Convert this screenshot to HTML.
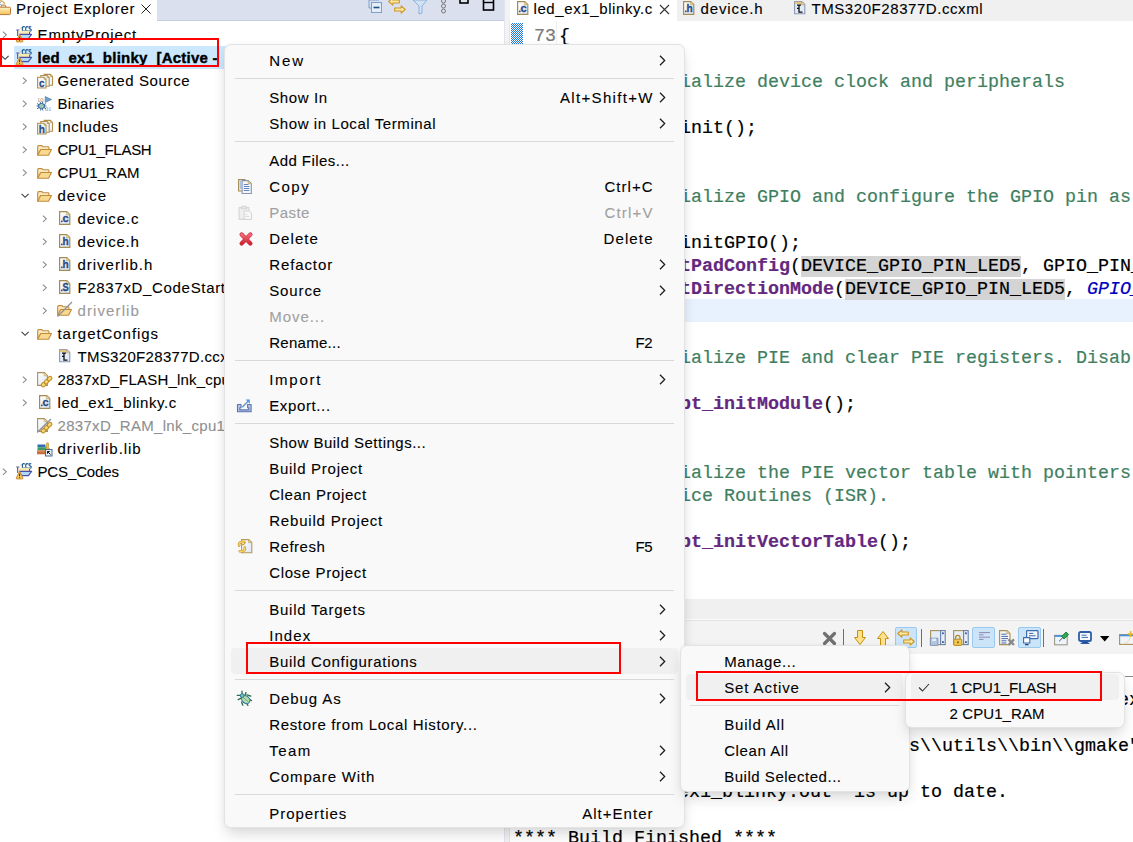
<!DOCTYPE html>
<html><head><meta charset="utf-8"><title>Eclipse context menu</title>
<style>
html,body{margin:0;padding:0;}
body{width:1133px;height:842px;overflow:hidden;position:relative;background:#fff;font-family:'Liberation Sans', sans-serif;}
.t{position:absolute;white-space:pre;font-family:'Liberation Sans', sans-serif;font-size:15px;line-height:20px;-webkit-text-stroke:0.1px currentColor;}
.m{position:absolute;white-space:pre;font-family:'Liberation Mono', monospace;font-size:18.33px;line-height:20px;color:#000;-webkit-text-stroke:0.2px currentColor;}
.m b{font-weight:bold;}
svg{overflow:visible;}
</style></head><body>
<svg width="0" height="0" style="position:absolute"><defs>
<linearGradient id="gPage" x1="0" y1="0" x2="1" y2="1"><stop offset="0" stop-color="#ffffff"/><stop offset="1" stop-color="#dde6f4"/></linearGradient>
<linearGradient id="gFold" x1="0" y1="0" x2="0" y2="1"><stop offset="0" stop-color="#fff6dc"/><stop offset="1" stop-color="#f2c66a"/></linearGradient>
<linearGradient id="gRed" x1="0" y1="0" x2="0" y2="1"><stop offset="0" stop-color="#f06a78"/><stop offset="1" stop-color="#d02838"/></linearGradient>
</defs></svg>
<div style="position:absolute;left:0px;top:0px;width:504px;height:21px;background:#dbe0ef;"></div>
<div style="position:absolute;left:0px;top:20px;width:504px;height:1px;background:#c8cde0;"></div>
<div style="position:absolute;left:0px;top:0px;width:157px;height:21px;background:#ffffff;"></div>
<svg style="position:absolute;left:0px;top:0px" width="12" height="16" viewBox="0 0 12 16"><defs><linearGradient id="gHf" x1="0" y1="0" x2="0" y2="1"><stop offset="0" stop-color="#fff4c8"/><stop offset="1" stop-color="#f2c052"/></linearGradient></defs><path d="M-1 0.5q4.5 0 5.8 3.6" fill="none" stroke="#d9b46a" stroke-width="1.4"/><path d="M0 2.5h1.2M0 4.5h1.6" stroke="#8aa8d8" stroke-width="0.9"/><path d="M1.2 7.2v-1.2q0-0.9 0.9-0.9h2.6q0.9 0 0.9 0.9v1.2" fill="#fff0c0" stroke="#b8783a" stroke-width="1"/><rect x="-1.5" y="7.2" width="12" height="7.4" rx="1" fill="url(#gHf)" stroke="#b8783a" stroke-width="1"/></svg>
<div class="t" style="left:16px;top:-1px;color:#000;letter-spacing:0.792px;">Project Explorer</div>
<svg style="position:absolute;left:141px;top:4px" width="10" height="10" viewBox="0 0 10 10"><path d="M0.5 0.5l9 9M9.5 0.5l-9 9" stroke="#222" stroke-width="1"/></svg>
<svg style="position:absolute;left:366px;top:0px" width="18" height="14" viewBox="0 0 18 14"><path d="M3 0v8h2M3 0h10" fill="none" stroke="#7aa0c8" stroke-width="1"/><rect x="5.5" y="2.5" width="10" height="10" fill="#e4eef8" stroke="#7aa0c8"/><path d="M7.5 7.5h6" stroke="#1e4f8a" stroke-width="1.6"/></svg>
<svg style="position:absolute;left:388px;top:-3px" width="19" height="18" viewBox="0 0 19 18"><path d="M0.8 4.5l4-3.7v2.2h6.5v3h-6.5v2.2z" fill="#fde9a6" stroke="#cf9420" stroke-width="1.1" stroke-linejoin="round"/><path d="M17.2 12.5l-4-3.7v2.2h-6.5v3h6.5v2.2z" fill="#fde9a6" stroke="#cf9420" stroke-width="1.1" stroke-linejoin="round"/></svg>
<svg style="position:absolute;left:412px;top:0px" width="16" height="14" viewBox="0 0 16 14"><path d="M1 0h14l-5 6v7l-3 1v-8z" fill="#cfe3f5" stroke="#8ab0d8" stroke-width="1"/></svg>
<svg style="position:absolute;left:439px;top:0px" width="9" height="14" viewBox="0 0 9 14"><circle cx="4.5" cy="1" r="2" fill="none" stroke="#777" stroke-width="1"/><circle cx="4.5" cy="6" r="2" fill="none" stroke="#777" stroke-width="1"/><circle cx="4.5" cy="11" r="2" fill="none" stroke="#777" stroke-width="1"/></svg>
<svg style="position:absolute;left:459px;top:0px" width="10" height="6" viewBox="0 0 10 6"><rect x="1" y="-2" width="8" height="5" fill="none" stroke="#000" stroke-width="1.6"/></svg>
<svg style="position:absolute;left:482px;top:0px" width="14" height="12" viewBox="0 0 14 12"><rect x="1.5" y="-1" width="10" height="11" fill="none" stroke="#000" stroke-width="1.6"/><path d="M1.5 2.5h10" stroke="#000" stroke-width="1.4"/></svg>
<div style="position:absolute;left:504px;top:0px;width:6px;height:842px;background:#f3f3f3;"></div>
<div style="position:absolute;left:504px;top:0px;width:1px;height:842px;background:#e2e5ee;"></div>
<div style="position:absolute;left:509px;top:21px;width:1px;height:842px;background:#e6e6e6;"></div>
<div style="position:absolute;left:14px;top:46px;width:490px;height:23px;background:#cce8ff;"></div>
<svg style="position:absolute;left:1.5px;top:31px" width="6" height="8" viewBox="0 0 6 8"><path d="M0.9 0.7l3.4 3.1-3.4 3.1" fill="none" stroke="#8c8c8c" stroke-width="1.1"/></svg>
<svg style="position:absolute;left:16px;top:26px" width="17" height="17" viewBox="0 0 17 17"><path d="M8.9 1.2Q8.3 0.6 7.6 0.6Q6.3 0.6 6.3 2.9Q6.3 5.2 7.6 5.2Q8.3 5.2 8.9 4.6M12.3 1.2Q11.7 0.6 11 0.6Q9.7 0.6 9.7 2.9Q9.7 5.2 11 5.2Q11.7 5.2 12.3 4.6M15.2 1.1Q14.7 0.6 14 0.6Q13 0.6 13 1.7Q13 2.6 14.1 2.9Q15.3 3.2 15.3 4.1Q15.3 5.2 14 5.2Q13.3 5.2 12.8 4.7" fill="none" stroke="#1b5795" stroke-width="1.1"/><path d="M2.5 4.8h11v3.6h-11z" fill="#fbeab0"/><path d="M0.2 4h3.2M1.6 4v6" stroke="#6c5fa0" stroke-width="1.2"/><path d="M4.5 2.5l1-1.2" stroke="#d9a94a" stroke-width="1"/><path d="M13.6 6v2.2" stroke="#4b4fa8" stroke-width="1.1"/><path d="M3.4 8.4h12.2l-3.2 4.2h-7z" fill="#aedaf8" stroke="#4b4fa8" stroke-width="1.1" stroke-linejoin="round"/><path d="M3.6 8.4l3.3 6.6q0.3 0.9-0.6 0.9h-5.4q-0.9 0-0.6-0.9z" fill="#f3c661" stroke="#c98e33" stroke-width="1"/><path d="M3.6 10.6v2.6M3.6 14v0.8" stroke="#3b2a10" stroke-width="1"/></svg>
<div class="t" style="left:37.5px;top:25px;color:#000;letter-spacing:0.872px;">EmptyProject</div>
<svg style="position:absolute;left:1px;top:54.5px" width="9" height="6" viewBox="0 0 9 6"><path d="M0.6 0.9l3.5 3.4 3.5-3.4" fill="none" stroke="#3c3c3c" stroke-width="1.15"/></svg>
<svg style="position:absolute;left:16px;top:49px" width="17" height="17" viewBox="0 0 17 17"><path d="M8.9 1.2Q8.3 0.6 7.6 0.6Q6.3 0.6 6.3 2.9Q6.3 5.2 7.6 5.2Q8.3 5.2 8.9 4.6M12.3 1.2Q11.7 0.6 11 0.6Q9.7 0.6 9.7 2.9Q9.7 5.2 11 5.2Q11.7 5.2 12.3 4.6M15.2 1.1Q14.7 0.6 14 0.6Q13 0.6 13 1.7Q13 2.6 14.1 2.9Q15.3 3.2 15.3 4.1Q15.3 5.2 14 5.2Q13.3 5.2 12.8 4.7" fill="none" stroke="#1b5795" stroke-width="1.1"/><path d="M2.5 4.8h11v3.6h-11z" fill="#fbeab0"/><path d="M0.2 4h3.2M1.6 4v6" stroke="#6c5fa0" stroke-width="1.2"/><path d="M4.5 2.5l1-1.2" stroke="#d9a94a" stroke-width="1"/><path d="M13.6 6v2.2" stroke="#4b4fa8" stroke-width="1.1"/><path d="M3.4 8.4h12.2l-3.2 4.2h-7z" fill="#aedaf8" stroke="#4b4fa8" stroke-width="1.1" stroke-linejoin="round"/><path d="M3.6 8.4l3.3 6.6q0.3 0.9-0.6 0.9h-5.4q-0.9 0-0.6-0.9z" fill="#f3c661" stroke="#c98e33" stroke-width="1"/><path d="M3.6 10.6v2.6M3.6 14v0.8" stroke="#3b2a10" stroke-width="1"/></svg>
<div class="t" style="left:37.5px;top:48px;color:#000;font-weight:bold;-webkit-text-stroke:0.4px currentColor;letter-spacing:0.24px;">led<span style="position:relative;top:2px">_</span>ex1<span style="position:relative;top:2px">_</span>blinky  [Active -</div>
<svg style="position:absolute;left:21.5px;top:77px" width="6" height="8" viewBox="0 0 6 8"><path d="M0.9 0.7l3.4 3.1-3.4 3.1" fill="none" stroke="#8c8c8c" stroke-width="1.1"/></svg>
<svg style="position:absolute;left:37px;top:74px" width="17" height="15" viewBox="0 0 17 15"><path d="M7.1 0.3999999999999999h6.4l2 2v8.8h-8.4z" fill="#f3f6fb" stroke="#b38f4c" stroke-width="1.1"/><path d="M13.5 0.3999999999999999v2h2" fill="#e8cf90" stroke="#b38f4c" stroke-width="0.7"/><path d="M3.8000000000000003 1.5h6.4l2 2v8.8h-8.4z" fill="#eef3fa" stroke="#b38f4c" stroke-width="1.1"/><path d="M10.2 1.5v2h2" fill="#e8cf90" stroke="#b38f4c" stroke-width="0.7"/><path d="M0.6 3.2h6.4l2 2v8.8h-8.4z" fill="#f6f8fc" stroke="#b38f4c" stroke-width="1.1"/><path d="M7 3.2v2h2" fill="#e8cf90" stroke="#b38f4c" stroke-width="0.7"/><text x="4.8" y="12.8" font-family="Liberation Sans" font-weight="bold" font-size="10" fill="#2b4d86" stroke="#2b4d86" stroke-width="0.3" text-anchor="middle">c</text></svg>
<div class="t" style="left:57.5px;top:71px;color:#000;letter-spacing:0.641px;">Generated Source</div>
<svg style="position:absolute;left:21.5px;top:100px" width="6" height="8" viewBox="0 0 6 8"><path d="M0.9 0.7l3.4 3.1-3.4 3.1" fill="none" stroke="#8c8c8c" stroke-width="1.1"/></svg>
<svg style="position:absolute;left:36px;top:96px" width="17" height="16" viewBox="0 0 17 16"><text x="1" y="5.5" font-family="Liberation Serif" font-size="6.5" fill="#8a8a8a">10</text><path d="M9.2 0.5l6.5 3-6.5 3z" fill="#6f9fc6" stroke="#4b7aa8" stroke-width="0.6"/><text x="9" y="14.5" font-family="Liberation Serif" font-size="6.5" fill="#8a8a8a">01</text><ellipse cx="5.5" cy="10" rx="3" ry="2.6" fill="#9ccab8" stroke="#2f5f98" stroke-width="1"/><path d="M1 7.5l2 1.2M0.5 10h2M1 12.8l2-1.2M10 7.5l-2 1.2M10.5 10h-2M10 12.8l-2-1.2M4 5.8l0.8 1.6M7 5.8l-0.8 1.6M4.5 14.5l0.5-1.6M6.8 14.5l-0.5-1.6" stroke="#2f5f98" stroke-width="0.9"/></svg>
<div class="t" style="left:57.5px;top:94px;color:#000;letter-spacing:0.314px;">Binaries</div>
<svg style="position:absolute;left:21.5px;top:123px" width="6" height="8" viewBox="0 0 6 8"><path d="M0.9 0.7l3.4 3.1-3.4 3.1" fill="none" stroke="#8c8c8c" stroke-width="1.1"/></svg>
<svg style="position:absolute;left:37px;top:120px" width="17" height="15" viewBox="0 0 17 15"><path d="M7.1 0.3999999999999999h6.4l2 2v8.8h-8.4z" fill="#f3f6fb" stroke="#b38f4c" stroke-width="1.1"/><path d="M13.5 0.3999999999999999v2h2" fill="#e8cf90" stroke="#b38f4c" stroke-width="0.7"/><path d="M3.8000000000000003 1.5h6.4l2 2v8.8h-8.4z" fill="#eef3fa" stroke="#b38f4c" stroke-width="1.1"/><path d="M10.2 1.5v2h2" fill="#e8cf90" stroke="#b38f4c" stroke-width="0.7"/><path d="M0.6 3.2h6.4l2 2v8.8h-8.4z" fill="#f6f8fc" stroke="#b38f4c" stroke-width="1.1"/><path d="M7 3.2v2h2" fill="#e8cf90" stroke="#b38f4c" stroke-width="0.7"/><text x="4.8" y="12.8" font-family="Liberation Sans" font-weight="bold" font-size="10" fill="#2b4d86" stroke="#2b4d86" stroke-width="0.3" text-anchor="middle">h</text></svg>
<div class="t" style="left:57.5px;top:117px;color:#000;letter-spacing:0.675px;">Includes</div>
<svg style="position:absolute;left:21.5px;top:146px" width="6" height="8" viewBox="0 0 6 8"><path d="M0.9 0.7l3.4 3.1-3.4 3.1" fill="none" stroke="#8c8c8c" stroke-width="1.1"/></svg>
<svg style="position:absolute;left:37px;top:145px" width="16" height="12" viewBox="0 0 16 12"><path d="M0.7 10.3V1.6q0-1 1-1h3.2l1 1.2h5.2q0.8 0 0.8 0.8v1.6" fill="url(#gFold)" stroke="#c18b3c" stroke-width="1.1"/><path d="M0.7 10.3l3-5.8h10.8l-3 5.8z" fill="#f7d98f" stroke="#c18b3c" stroke-width="1.1" stroke-linejoin="round"/></svg>
<div class="t" style="left:57.5px;top:140px;color:#000;letter-spacing:-0.278px;">CPU1_FLASH</div>
<svg style="position:absolute;left:21.5px;top:169px" width="6" height="8" viewBox="0 0 6 8"><path d="M0.9 0.7l3.4 3.1-3.4 3.1" fill="none" stroke="#8c8c8c" stroke-width="1.1"/></svg>
<svg style="position:absolute;left:37px;top:168px" width="16" height="12" viewBox="0 0 16 12"><path d="M0.7 10.3V1.6q0-1 1-1h3.2l1 1.2h5.2q0.8 0 0.8 0.8v1.6" fill="url(#gFold)" stroke="#c18b3c" stroke-width="1.1"/><path d="M0.7 10.3l3-5.8h10.8l-3 5.8z" fill="#f7d98f" stroke="#c18b3c" stroke-width="1.1" stroke-linejoin="round"/></svg>
<div class="t" style="left:57.5px;top:163px;color:#000;letter-spacing:0.045px;">CPU1_RAM</div>
<svg style="position:absolute;left:21px;top:192.5px" width="9" height="6" viewBox="0 0 9 6"><path d="M0.6 0.9l3.5 3.4 3.5-3.4" fill="none" stroke="#3c3c3c" stroke-width="1.15"/></svg>
<svg style="position:absolute;left:37px;top:191px" width="16" height="12" viewBox="0 0 16 12"><path d="M0.7 10.3V1.6q0-1 1-1h3.2l1 1.2h5.2q0.8 0 0.8 0.8v1.6" fill="url(#gFold)" stroke="#c18b3c" stroke-width="1.1"/><path d="M0.7 10.3l3-5.8h10.8l-3 5.8z" fill="#f7d98f" stroke="#c18b3c" stroke-width="1.1" stroke-linejoin="round"/></svg>
<div class="t" style="left:57.5px;top:186px;color:#000;letter-spacing:1.028px;">device</div>
<svg style="position:absolute;left:41.5px;top:215px" width="6" height="8" viewBox="0 0 6 8"><path d="M0.9 0.7l3.4 3.1-3.4 3.1" fill="none" stroke="#8c8c8c" stroke-width="1.1"/></svg>
<svg style="position:absolute;left:59px;top:211px" width="12" height="15" viewBox="0 0 12 15"><path d="M0.6 0.6h7.2l3 3v9.8h-10.2z" fill="url(#gPage)" stroke="#a38b55" stroke-width="1.2"/><path d="M7.6 0.8v3h3" fill="#efd9a0" stroke="#c4a868" stroke-width="0.8"/><rect x="2" y="9.6" width="1.6" height="1.6" fill="#2b4d86"/><text x="3.6" y="11.4" font-family="Liberation Sans" font-weight="bold" font-size="10.5" fill="#2b4d86" stroke="#2b4d86" stroke-width="0.35" textLength="6.2" lengthAdjust="spacingAndGlyphs">c</text></svg>
<div class="t" style="left:77.5px;top:209px;color:#000;letter-spacing:0.838px;">device.c</div>
<svg style="position:absolute;left:41.5px;top:238px" width="6" height="8" viewBox="0 0 6 8"><path d="M0.9 0.7l3.4 3.1-3.4 3.1" fill="none" stroke="#8c8c8c" stroke-width="1.1"/></svg>
<svg style="position:absolute;left:59px;top:234px" width="12" height="15" viewBox="0 0 12 15"><path d="M0.6 0.6h7.2l3 3v9.8h-10.2z" fill="url(#gPage)" stroke="#a38b55" stroke-width="1.2"/><path d="M7.6 0.8v3h3" fill="#efd9a0" stroke="#c4a868" stroke-width="0.8"/><rect x="2" y="9.6" width="1.6" height="1.6" fill="#2b4d86"/><text x="3.6" y="11.4" font-family="Liberation Sans" font-weight="bold" font-size="10" fill="#2b4d86" stroke="#2b4d86" stroke-width="0.35" textLength="6.2" lengthAdjust="spacingAndGlyphs">h</text></svg>
<div class="t" style="left:77.5px;top:232px;color:#000;letter-spacing:0.789px;">device.h</div>
<svg style="position:absolute;left:41.5px;top:261px" width="6" height="8" viewBox="0 0 6 8"><path d="M0.9 0.7l3.4 3.1-3.4 3.1" fill="none" stroke="#8c8c8c" stroke-width="1.1"/></svg>
<svg style="position:absolute;left:59px;top:257px" width="12" height="15" viewBox="0 0 12 15"><path d="M0.6 0.6h7.2l3 3v9.8h-10.2z" fill="url(#gPage)" stroke="#a38b55" stroke-width="1.2"/><path d="M7.6 0.8v3h3" fill="#efd9a0" stroke="#c4a868" stroke-width="0.8"/><rect x="2" y="9.6" width="1.6" height="1.6" fill="#2b4d86"/><text x="3.6" y="11.4" font-family="Liberation Sans" font-weight="bold" font-size="10" fill="#2b4d86" stroke="#2b4d86" stroke-width="0.35" textLength="6.2" lengthAdjust="spacingAndGlyphs">h</text></svg>
<div class="t" style="left:77.5px;top:255px;color:#000;letter-spacing:0.977px;">driverlib.h</div>
<svg style="position:absolute;left:41.5px;top:284px" width="6" height="8" viewBox="0 0 6 8"><path d="M0.9 0.7l3.4 3.1-3.4 3.1" fill="none" stroke="#8c8c8c" stroke-width="1.1"/></svg>
<svg style="position:absolute;left:59px;top:280px" width="12" height="15" viewBox="0 0 12 15"><path d="M0.6 0.6h7.2l3 3v9.8h-10.2z" fill="url(#gPage)" stroke="#a38b55" stroke-width="1.2"/><path d="M7.6 0.8v3h3" fill="#efd9a0" stroke="#c4a868" stroke-width="0.8"/><rect x="2" y="9.6" width="1.6" height="1.6" fill="#2b4d86"/><text x="3.6" y="11.4" font-family="Liberation Sans" font-weight="bold" font-size="10.5" fill="#2b4d86" stroke="#2b4d86" stroke-width="0.35" textLength="6.2" lengthAdjust="spacingAndGlyphs">S</text></svg>
<div class="t" style="left:77.5px;top:278px;color:#000;letter-spacing:0.672px;">F2837xD_CodeStartBranch.asm</div>
<svg style="position:absolute;left:41.5px;top:307px" width="6" height="8" viewBox="0 0 6 8"><path d="M0.9 0.7l3.4 3.1-3.4 3.1" fill="none" stroke="#8c8c8c" stroke-width="1.1"/></svg>
<svg style="position:absolute;left:57px;top:305px" width="16" height="12" viewBox="0 0 16 12"><path d="M0.7 10.3V1.6q0-1 1-1h3.2l1 1.2h5.2q0.8 0 0.8 0.8v1.6" fill="url(#gFold)" stroke="#c18b3c" stroke-width="1.1"/><path d="M0.7 10.3l3-5.8h10.8l-3 5.8z" fill="#f7d98f" stroke="#c18b3c" stroke-width="1.1" stroke-linejoin="round"/></svg>
<svg style="position:absolute;left:0;top:0;overflow:visible" width="1" height="1"><path d="M57.5 316.5L72 302" stroke="#8f8f98" stroke-width="1.3"/></svg>
<div class="t" style="left:77.5px;top:301px;color:#9a9a9a;letter-spacing:1.111px;">driverlib</div>
<svg style="position:absolute;left:21px;top:330.5px" width="9" height="6" viewBox="0 0 9 6"><path d="M0.6 0.9l3.5 3.4 3.5-3.4" fill="none" stroke="#3c3c3c" stroke-width="1.15"/></svg>
<svg style="position:absolute;left:37px;top:329px" width="16" height="12" viewBox="0 0 16 12"><path d="M0.7 10.3V1.6q0-1 1-1h3.2l1 1.2h5.2q0.8 0 0.8 0.8v1.6" fill="url(#gFold)" stroke="#c18b3c" stroke-width="1.1"/><path d="M0.7 10.3l3-5.8h10.8l-3 5.8z" fill="#f7d98f" stroke="#c18b3c" stroke-width="1.1" stroke-linejoin="round"/></svg>
<div class="t" style="left:57.5px;top:324px;color:#000;letter-spacing:0.948px;">targetConfigs</div>
<svg style="position:absolute;left:59px;top:349px" width="12" height="14" viewBox="0 0 12 14"><path d="M0.6 0.6h7.2l3 3v9.2h-10.2z" fill="#e3ebf7" stroke="#8b97b6" stroke-width="1.1"/><path d="M0.8 0.8h7v2.2h-7z" fill="#e6c77a"/><path d="M7.6 0.8v3h3" fill="#efd9a0" stroke="#b9a06a" stroke-width="0.7"/><path d="M3 4.2h4M5 4.2v3.2h-2M5 7.4v3.8h3.5" fill="none" stroke="#111" stroke-width="1.3"/></svg>
<div class="t" style="left:77.5px;top:347px;color:#000;letter-spacing:0.317px;">TMS320F28377D.ccxml</div>
<svg style="position:absolute;left:21.5px;top:376px" width="6" height="8" viewBox="0 0 6 8"><path d="M0.9 0.7l3.4 3.1-3.4 3.1" fill="none" stroke="#8c8c8c" stroke-width="1.1"/></svg>
<svg style="position:absolute;left:37px;top:372px" width="15" height="16" viewBox="0 0 15 16"><path d="M0.6 0.6h6.8l3 3v9.8h-9.8z" fill="url(#gPage)" stroke="#a8935c" stroke-width="1.1"/><path d="M7.2 0.8v3h3" fill="#efd9a0" stroke="#c4a868" stroke-width="0.7"/><g transform="rotate(-45 9.6 9.6)"><ellipse cx="5.4" cy="9.6" rx="2.6" ry="1.9" fill="#f6d778" stroke="#c08a20" stroke-width="1"/><ellipse cx="9.6" cy="9.6" rx="2.6" ry="1.9" fill="#f6d778" stroke="#c08a20" stroke-width="1"/><ellipse cx="13.8" cy="9.6" rx="2.6" ry="1.9" fill="#f6d778" stroke="#c08a20" stroke-width="1"/></g></svg>
<div class="t" style="left:57.5px;top:370px;color:#000;letter-spacing:0.211px;">2837xD_FLASH_lnk_cpu1.cmd</div>
<svg style="position:absolute;left:21.5px;top:399px" width="6" height="8" viewBox="0 0 6 8"><path d="M0.9 0.7l3.4 3.1-3.4 3.1" fill="none" stroke="#8c8c8c" stroke-width="1.1"/></svg>
<svg style="position:absolute;left:39px;top:395px" width="12" height="15" viewBox="0 0 12 15"><path d="M0.6 0.6h7.2l3 3v9.8h-10.2z" fill="url(#gPage)" stroke="#a38b55" stroke-width="1.2"/><path d="M7.6 0.8v3h3" fill="#efd9a0" stroke="#c4a868" stroke-width="0.8"/><rect x="2" y="9.6" width="1.6" height="1.6" fill="#2b4d86"/><text x="3.6" y="11.4" font-family="Liberation Sans" font-weight="bold" font-size="10.5" fill="#2b4d86" stroke="#2b4d86" stroke-width="0.35" textLength="6.2" lengthAdjust="spacingAndGlyphs">c</text></svg>
<div class="t" style="left:57.5px;top:393px;color:#000;letter-spacing:0.6px;">led_ex1_blinky.c</div>
<svg style="position:absolute;left:37px;top:418px" width="15" height="16" viewBox="0 0 15 16"><path d="M0.6 0.6h6.8l3 3v9.8h-9.8z" fill="url(#gPage)" stroke="#a8935c" stroke-width="1.1"/><path d="M7.2 0.8v3h3" fill="#efd9a0" stroke="#c4a868" stroke-width="0.7"/><g transform="rotate(-45 9.6 9.6)"><ellipse cx="5.4" cy="9.6" rx="2.6" ry="1.9" fill="#f6d778" stroke="#c08a20" stroke-width="1"/><ellipse cx="9.6" cy="9.6" rx="2.6" ry="1.9" fill="#f6d778" stroke="#c08a20" stroke-width="1"/><ellipse cx="13.8" cy="9.6" rx="2.6" ry="1.9" fill="#f6d778" stroke="#c08a20" stroke-width="1"/></g><path d="M0.2 14.5L14 1" stroke="#8f8f98" stroke-width="1.3"/></svg>
<div class="t" style="left:57.5px;top:416px;color:#8f8f8f;letter-spacing:0.313px;">2837xD_RAM_lnk_cpu1.cmd</div>
<svg style="position:absolute;left:37px;top:442px" width="16" height="15" viewBox="0 0 16 15"><rect x="0.5" y="2.5" width="8" height="2.6" fill="#2f6fb2"/><rect x="0.5" y="5.2" width="9.5" height="3" fill="#3f9a66"/><rect x="0" y="8.3" width="10" height="4" fill="#c9703e"/><path d="M0 9.3h9.5" stroke="#e8a070" stroke-width="0.6"/><path d="M9.5 1.2q1.3-1.2 2 0v4.5l1.2 1.4h-4.2l1-1.4z" fill="#f0c040" stroke="#b98a20" stroke-width="0.6"/><rect x="8.5" y="7.5" width="6.5" height="6.5" fill="#e8f0f8" stroke="#4a6a98" stroke-width="1"/><path d="M10.5 9.5l3 3M10.5 9.5h2.2M10.5 9.5v2.2" fill="none" stroke="#111" stroke-width="1"/></svg>
<div class="t" style="left:57.5px;top:439px;color:#000;letter-spacing:0.958px;">driverlib.lib</div>
<svg style="position:absolute;left:1.5px;top:468px" width="6" height="8" viewBox="0 0 6 8"><path d="M0.9 0.7l3.4 3.1-3.4 3.1" fill="none" stroke="#8c8c8c" stroke-width="1.1"/></svg>
<svg style="position:absolute;left:16px;top:463px" width="17" height="17" viewBox="0 0 17 17"><path d="M8.9 1.2Q8.3 0.6 7.6 0.6Q6.3 0.6 6.3 2.9Q6.3 5.2 7.6 5.2Q8.3 5.2 8.9 4.6M12.3 1.2Q11.7 0.6 11 0.6Q9.7 0.6 9.7 2.9Q9.7 5.2 11 5.2Q11.7 5.2 12.3 4.6M15.2 1.1Q14.7 0.6 14 0.6Q13 0.6 13 1.7Q13 2.6 14.1 2.9Q15.3 3.2 15.3 4.1Q15.3 5.2 14 5.2Q13.3 5.2 12.8 4.7" fill="none" stroke="#1b5795" stroke-width="1.1"/><path d="M2.5 4.8h11v3.6h-11z" fill="#fbeab0"/><path d="M0.2 4h3.2M1.6 4v6" stroke="#6c5fa0" stroke-width="1.2"/><path d="M4.5 2.5l1-1.2" stroke="#d9a94a" stroke-width="1"/><path d="M13.6 6v2.2" stroke="#4b4fa8" stroke-width="1.1"/><path d="M3.4 8.4h12.2l-3.2 4.2h-7z" fill="#aedaf8" stroke="#4b4fa8" stroke-width="1.1" stroke-linejoin="round"/><path d="M3.6 8.4l3.3 6.6q0.3 0.9-0.6 0.9h-5.4q-0.9 0-0.6-0.9z" fill="#f3c661" stroke="#c98e33" stroke-width="1"/><path d="M3.6 10.6v2.6M3.6 14v0.8" stroke="#3b2a10" stroke-width="1"/></svg>
<div class="t" style="left:37.5px;top:462px;color:#000;letter-spacing:-0.131px;">PCS_Codes</div>
<div style="position:absolute;left:510px;top:0px;width:623px;height:21px;background:#f0f0f0;"></div>
<div style="position:absolute;left:677px;top:21px;width:456px;height:1px;background:#e9e9e9;"></div>
<div style="position:absolute;left:510px;top:0px;width:167px;height:21px;background:#ffffff;"></div>
<svg style="position:absolute;left:517px;top:1px" width="12" height="15" viewBox="0 0 12 15"><path d="M0.6 0.6h7.2l3 3v9.8h-10.2z" fill="url(#gPage)" stroke="#a38b55" stroke-width="1.2"/><path d="M7.6 0.8v3h3" fill="#efd9a0" stroke="#c4a868" stroke-width="0.8"/><rect x="2" y="9.6" width="1.6" height="1.6" fill="#2b4d86"/><text x="3.6" y="11.4" font-family="Liberation Sans" font-weight="bold" font-size="10.5" fill="#2b4d86" stroke="#2b4d86" stroke-width="0.35" textLength="6.2" lengthAdjust="spacingAndGlyphs">c</text></svg>
<div class="t" style="left:533.5px;top:-1px;color:#000;letter-spacing:0.6px;">led_ex1_blinky.c</div>
<svg style="position:absolute;left:659px;top:4px" width="12" height="11" viewBox="0 0 12 11"><path d="M1 1l9 9M10 1l-9 9" stroke="#333" stroke-width="1.1"/></svg>
<svg style="position:absolute;left:683px;top:1px" width="12" height="15" viewBox="0 0 12 15"><path d="M0.6 0.6h7.2l3 3v9.8h-10.2z" fill="url(#gPage)" stroke="#a38b55" stroke-width="1.2"/><path d="M7.6 0.8v3h3" fill="#efd9a0" stroke="#c4a868" stroke-width="0.8"/><rect x="2" y="9.6" width="1.6" height="1.6" fill="#2b4d86"/><text x="3.6" y="11.4" font-family="Liberation Sans" font-weight="bold" font-size="10" fill="#2b4d86" stroke="#2b4d86" stroke-width="0.35" textLength="6.2" lengthAdjust="spacingAndGlyphs">h</text></svg>
<div class="t" style="left:700.5px;top:-1px;color:#000;letter-spacing:0.889px;">device.h</div>
<svg style="position:absolute;left:794px;top:1px" width="12" height="14" viewBox="0 0 12 14"><path d="M0.6 0.6h7.2l3 3v9.2h-10.2z" fill="#e3ebf7" stroke="#8b97b6" stroke-width="1.1"/><path d="M0.8 0.8h7v2.2h-7z" fill="#e6c77a"/><path d="M7.6 0.8v3h3" fill="#efd9a0" stroke="#b9a06a" stroke-width="0.7"/><path d="M3 4.2h4M5 4.2v3.2h-2M5 7.4v3.8h3.5" fill="none" stroke="#111" stroke-width="1.3"/></svg>
<div class="t" style="left:811.5px;top:-1px;color:#000;letter-spacing:0.566px;">TMS320F28377D.ccxml</div>
<div style="position:absolute;left:510px;top:21px;width:623px;height:578px;background:#ffffff;"></div>
<div style="position:absolute;left:557px;top:299px;width:576px;height:23px;background:#e8f2fe;"></div>
<div style="position:absolute;left:511px;top:23px;width:12px;height:22px;background-image:repeating-conic-gradient(#1e78dc 0 25%, #ffffff 0 50%);background-size:2px 2px;"></div>
<div style="position:absolute;left:556px;top:21px;width:1px;height:578px;background:#eeeeee;"></div>
<div class="m" style="left:534px;top:27px;"><span style="color:#787878">73</span></div>
<div class="m" style="left:559px;top:27px;">{</div>
<div class="m" style="left:559px;top:50px;"><span style="color:#3f7f5f">    //</span></div>
<div class="m" style="left:559px;top:73px;"><span style="color:#3f7f5f">    // Initialize device clock and peripherals</span></div>
<div class="m" style="left:559px;top:96px;"><span style="color:#3f7f5f">    //</span></div>
<div class="m" style="left:559px;top:119px;">    Device_init();</div>
<div class="m" style="left:559px;top:142px;"></div>
<div class="m" style="left:559px;top:165px;"><span style="color:#3f7f5f">    //</span></div>
<div class="m" style="left:559px;top:188px;"><span style="color:#3f7f5f">    // Initialize GPIO and configure the GPIO pin as a push-pull output</span></div>
<div class="m" style="left:559px;top:211px;"><span style="color:#3f7f5f">    //</span></div>
<div class="m" style="left:559px;top:234px;">    Device_initGPIO();</div>
<div class="m" style="left:559px;top:257px;">    <b style="color:#642880">GPIO_setPadConfig</b>(<span style="background:#d4d4d4">DEVICE_GPIO_PIN_LED5</span>, GPIO_PIN_TYPE_STD);</div>
<div class="m" style="left:559px;top:280px;">    <b style="color:#642880">GPIO_setDirectionMode</b>(<span style="background:#d4d4d4">DEVICE_GPIO_PIN_LED5</span>, <i style="color:#0000c0">GPIO_DIR_MODE_OUT</i>);</div>
<div class="m" style="left:559px;top:303px;"></div>
<div class="m" style="left:559px;top:326px;"><span style="color:#3f7f5f">    //</span></div>
<div class="m" style="left:559px;top:349px;"><span style="color:#3f7f5f">    // Initialize PIE and clear PIE registers. Disables CPU interrupts.</span></div>
<div class="m" style="left:559px;top:372px;"><span style="color:#3f7f5f">    //</span></div>
<div class="m" style="left:559px;top:395px;">    <b style="color:#642880">Interrupt_initModule</b>();</div>
<div class="m" style="left:559px;top:418px;"></div>
<div class="m" style="left:559px;top:441px;"><span style="color:#3f7f5f">    //</span></div>
<div class="m" style="left:559px;top:464px;"><span style="color:#3f7f5f">    // Initialize the PIE vector table with pointers to the shell Interrupt</span></div>
<div class="m" style="left:559px;top:487px;"><span style="color:#3f7f5f">    // Service Routines (ISR).</span></div>
<div class="m" style="left:559px;top:510px;"><span style="color:#3f7f5f">    //</span></div>
<div class="m" style="left:559px;top:533px;">    <b style="color:#642880">Interrupt_initVectorTable</b>();</div>
<div class="m" style="left:559px;top:556px;"></div>
<div class="m" style="left:559px;top:579px;"><span style="color:#3f7f5f">    //</span></div>
<div style="position:absolute;left:510px;top:599px;width:623px;height:21px;background:#f0f0f0;"></div>
<div style="position:absolute;left:510px;top:619px;width:623px;height:1px;background:#fbfbfb;"></div>
<div style="position:absolute;left:510px;top:620px;width:623px;height:1px;background:#e3e3e3;"></div>
<div style="position:absolute;left:510px;top:621px;width:623px;height:33px;background:#f3f3f3;"></div>
<div style="position:absolute;left:510px;top:654px;width:623px;height:188px;background:#ffffff;"></div>
<svg style="position:absolute;left:822px;top:631px" width="15" height="15" viewBox="0 0 15 15"><path d="M2.5 2.5l10 10M12.5 2.5l-10 10" stroke="#707070" stroke-width="3.2" stroke-linecap="round"/></svg>
<div style="position:absolute;left:843px;top:629px;width:1px;height:18px;background:#6e6e6e;"></div>
<svg style="position:absolute;left:853px;top:629px" width="14" height="18" viewBox="0 0 14 18"><path d="M4.5 1.5h5v7h3l-5.5 7-5.5-7h3z" fill="#fde28a" stroke="#c98f10" stroke-width="1"/></svg>
<svg style="position:absolute;left:876px;top:629px" width="14" height="18" viewBox="0 0 14 18"><path d="M4.5 16.5h5v-7h3l-5.5-7-5.5 7h3z" fill="#fde28a" stroke="#c98f10" stroke-width="1"/></svg>
<div style="position:absolute;left:895px;top:627px;width:22px;height:21px;background:#cce4f7;border:1px solid #99c9ef;box-sizing:border-box;border-radius:2px;"></div>
<svg style="position:absolute;left:897px;top:629px" width="19" height="18" viewBox="0 0 19 18"><path d="M0.8 4.5l4-3.7v2.2h6.5v3h-6.5v2.2z" fill="#fde9a6" stroke="#cf9420" stroke-width="1.1" stroke-linejoin="round"/><path d="M17.2 12.5l-4-3.7v2.2h-6.5v3h6.5v2.2z" fill="#fde9a6" stroke="#cf9420" stroke-width="1.1" stroke-linejoin="round"/></svg>
<div style="position:absolute;left:921px;top:629px;width:1px;height:18px;background:#6e6e6e;"></div>
<svg style="position:absolute;left:930px;top:630px" width="16" height="16" viewBox="0 0 16 16"><rect x="0.6" y="0.6" width="10" height="14" fill="#e2edf8" stroke="#a89058" stroke-width="1.1"/><rect x="10.6" y="0.6" width="4.6" height="14" fill="#e8eff8" stroke="#6880a8" stroke-width="1.1"/><rect x="12" y="2.4" width="1.8" height="1.8" fill="#3a5a98"/><rect x="12" y="11.2" width="1.8" height="1.8" fill="#3a5a98"/><path d="M0.3 8.2h7.6v7.2h-7.6z" fill="#b4c4dc" stroke="#7890b8" stroke-width="0.9"/><rect x="2" y="8.6" width="4" height="2.4" fill="#e6eef8"/></svg>
<svg style="position:absolute;left:953px;top:630px" width="16" height="16" viewBox="0 0 16 16"><rect x="0.6" y="0.6" width="10" height="14" fill="#e2edf8" stroke="#a89058" stroke-width="1.1"/><rect x="10.6" y="0.6" width="4.6" height="14" fill="#e8eff8" stroke="#6880a8" stroke-width="1.1"/><rect x="12" y="2.4" width="1.8" height="1.8" fill="#3a5a98"/><rect x="12" y="11.2" width="1.8" height="1.8" fill="#3a5a98"/><path d="M2.6 9.4v-1.6q0-2.4 2.2-2.4t2.2 2.4v1.6" fill="none" stroke="#b88a20" stroke-width="1.3"/><rect x="0.8" y="9.2" width="8" height="6.2" rx="1" fill="#f2c850" stroke="#b88a20" stroke-width="1"/><rect x="4.2" y="11.4" width="1.4" height="1.8" fill="#6a4a10"/></svg>
<div style="position:absolute;left:972px;top:627px;width:23px;height:21px;background:#cce4f7;border:1px solid #99c9ef;box-sizing:border-box;border-radius:2px;"></div>
<svg style="position:absolute;left:978px;top:631px" width="14" height="10" viewBox="0 0 14 10"><path d="M1 1.6h11M1 3.8h4.5M1 6.2h11M1 8.4h4.5" stroke="#9088b8" stroke-width="1"/></svg>
<svg style="position:absolute;left:999px;top:630px" width="17" height="17" viewBox="0 0 17 17"><path d="M0.6 0.6h7.4l3 3v11h-10.4z" fill="#f4f6fb" stroke="#a89058" stroke-width="1.1"/><path d="M7.8 0.8v2.9h2.9" fill="#e8cf90" stroke="#c4a868" stroke-width="0.7"/><path d="M2.4 4.2h5M2.4 6.4h6.6M2.4 8.6h6.6M2.4 10.8h5M2.4 13h5" stroke="#4a6aa8" stroke-width="1"/><path d="M9.4 9.4l5.6 5.6M15 9.4l-5.6 5.6" stroke="#8a8a8a" stroke-width="2.4"/></svg>
<div style="position:absolute;left:1018px;top:627px;width:23px;height:21px;background:#cce4f7;border:1px solid #99c9ef;box-sizing:border-box;border-radius:2px;"></div>
<svg style="position:absolute;left:1022px;top:629px" width="18" height="18" viewBox="0 0 18 18"><rect x="4.6" y="1.6" width="11.4" height="8" rx="0.8" fill="#f4f8fc" stroke="#3a6ab0" stroke-width="1.2"/><path d="M7 4.4h4.4M7 6.8h6.6" stroke="#3a6ab0" stroke-width="1"/><path d="M1.6 8.6h6.2v5.4h-6.2z" fill="#fff" stroke="#3a6ab0" stroke-width="1.1"/><path d="M3 15.6h3.6" stroke="#2a4a88" stroke-width="1.4"/></svg>
<div style="position:absolute;left:1043px;top:629px;width:1px;height:18px;background:#6e6e6e;"></div>
<svg style="position:absolute;left:1054px;top:631px" width="16" height="15" viewBox="0 0 16 15"><rect x="0.6" y="4.4" width="12.6" height="9.4" fill="#eef4fa" stroke="#9a9a8a" stroke-width="1.1"/><path d="M0.6 5h12.6" stroke="#4a90d8" stroke-width="1.8"/><path d="M5.2 10.2l3.6-3.6" stroke="#3a4a6a" stroke-width="1"/><path d="M7.6 5.6l4.4-4.6 2.6 2.6-4.6 4.4z" fill="#2ea84a" stroke="#1a7a3a" stroke-width="0.9"/></svg>
<svg style="position:absolute;left:1078px;top:631px" width="14" height="14" viewBox="0 0 14 14"><rect x="1" y="1" width="12" height="9" rx="1.6" fill="#f4f8fc" stroke="#2e5da8" stroke-width="1.8"/><path d="M3.6 4.2h5M3.6 6.4h6.4" stroke="#2e5da8" stroke-width="0.9"/><path d="M4.6 10.4h4.8v1.6h-4.8zM2.6 12.4h8.8" stroke="#2e5da8" stroke-width="1.3"/></svg>
<svg style="position:absolute;left:1100px;top:636px" width="10" height="6" viewBox="0 0 10 6"><path d="M0 0h9.4l-4.7 5.4z" fill="#000"/></svg>
<svg style="position:absolute;left:1119px;top:630px" width="15" height="16" viewBox="0 0 15 16"><rect x="0.6" y="4.6" width="14" height="9.8" fill="#eef4fa" stroke="#a89058" stroke-width="1.1"/><path d="M0.6 5.4h14" stroke="#4a90d8" stroke-width="1.8"/><path d="M4 14q6-1 7.6-8" fill="none" stroke="#f0d890" stroke-width="0.9"/><path d="M11.6 1v6M8.6 4h6" stroke="#e8b830" stroke-width="1.6"/></svg>
<div class="m" style="left:513px;top:691px;">**** Build of configuration CPU1_FLASH for project led_ex1_blinky ****</div>
<div class="m" style="left:909px;top:737px;">s\\utils\\bin\\gmake&quot; -k -j 12 all -O </div>
<div class="m" style="left:513px;top:783px;">gmake[1]: &#x27;led_ex1_blinky.out&#x27; is up to date.</div>
<div class="m" style="left:513px;top:829px;">**** Build Finished ****</div>
<div style="position:absolute;left:1125px;top:676px;width:8px;height:1px;background:#8a8a8a;"></div>
<div style="position:absolute;left:224px;top:44.3px;width:460.5px;height:784px;background:#f9f9f9;border:1px solid #e3e3e3;box-sizing:border-box;border-radius:7px;box-shadow:0 8px 14px -2px rgba(0,0,0,0.15), 0 0 4px rgba(0,0,0,0.04);"></div>
<div class="t" style="left:269.2px;top:51px;color:#000;letter-spacing:1.992px;">New</div>
<svg style="position:absolute;left:659px;top:55px" width="7" height="11" viewBox="0 0 7 11"><path d="M1 0.7l4.7 4.8-4.7 4.8" fill="none" stroke="#1c1c1c" stroke-width="1.25"/></svg>
<div style="position:absolute;left:235px;top:78px;width:439px;height:1px;background:#d9d9d9;"></div>
<div class="t" style="left:269.2px;top:88px;color:#000;letter-spacing:0.616px;">Show In</div>
<div class="t" style="right:479.16px;top:88px;color:#000;letter-spacing:1.34px;">Alt+Shift+W</div>
<svg style="position:absolute;left:659px;top:92px" width="7" height="11" viewBox="0 0 7 11"><path d="M1 0.7l4.7 4.8-4.7 4.8" fill="none" stroke="#1c1c1c" stroke-width="1.25"/></svg>
<div class="t" style="left:269.2px;top:114px;color:#000;letter-spacing:0.591px;">Show in Local Terminal</div>
<svg style="position:absolute;left:659px;top:118px" width="7" height="11" viewBox="0 0 7 11"><path d="M1 0.7l4.7 4.8-4.7 4.8" fill="none" stroke="#1c1c1c" stroke-width="1.25"/></svg>
<div style="position:absolute;left:235px;top:141px;width:439px;height:1px;background:#d9d9d9;"></div>
<div class="t" style="left:269.2px;top:151px;color:#000;letter-spacing:0.452px;">Add Files...</div>
<div class="t" style="left:269.2px;top:177px;color:#000;letter-spacing:1.49px;">Copy</div>
<div class="t" style="right:479.464px;top:177px;color:#000;letter-spacing:1.036px;">Ctrl+C</div>
<svg style="position:absolute;left:236px;top:178px" width="17" height="17" viewBox="0 0 17 17"><path d="M2.6 1.6h6.4v11.4h-6.4z" fill="#eef4fb" stroke="#a38b55" stroke-width="1.1"/><path d="M3.8 4h1.6M3.8 6h1.6M3.8 8h1.6M3.8 10h1.6" stroke="#5f86c0" stroke-width="0.9"/><path d="M6.1 2.6h6.2l3 3v9.9h-9.2z" fill="#f4f7fc" stroke="#8a95ad" stroke-width="1.1"/><path d="M12.2 2.8v2.9h2.9" fill="#e8cf90" stroke="#c4a868" stroke-width="0.8"/><path d="M7.8 6.5h4.6M7.8 8.5h5.6M7.8 10.5h5.6M7.8 12.5h5.6" stroke="#5f86c0" stroke-width="1"/></svg>
<div class="t" style="left:269.2px;top:203px;color:#a0a0a0;letter-spacing:0.46px;">Paste</div>
<div class="t" style="right:479.299px;top:203px;color:#a0a0a0;letter-spacing:1.201px;">Ctrl+V</div>
<svg style="position:absolute;left:238px;top:205px" width="15" height="16" viewBox="0 0 15 16"><g opacity="0.5"><path d="M1.1 2.6h9.8v11.8h-9.8z" fill="#e6e6e6" stroke="#b4b4b4" stroke-width="1.1"/><path d="M3.6 1.2h4.8v2.6h-4.8z" fill="#d8d8d8" stroke="#b0b0b0" stroke-width="1"/><path d="M6.1 6.1h5.4l2 2v6.3h-7.4z" fill="#f6f6f6" stroke="#b0b0b0" stroke-width="1"/><path d="M7.5 9.5h2M7.5 11.5h3.5" stroke="#b8b8b8" stroke-width="0.8"/></g></svg>
<div class="t" style="left:269.2px;top:229px;color:#000;letter-spacing:1.068px;">Delete</div>
<div class="t" style="right:479.352px;top:229px;color:#000;letter-spacing:1.148px;">Delete</div>
<svg style="position:absolute;left:238.5px;top:231.5px" width="15" height="15" viewBox="0 0 15 15"><path d="M2.6 2.6l8.8 8.8M11.4 2.6l-8.8 8.8" stroke="#c92a3a" stroke-width="4.2" stroke-linecap="round"/><path d="M2.6 2.6l8.8 8.8M11.4 2.6l-8.8 8.8" stroke="url(#gRed)" stroke-width="3" stroke-linecap="round"/></svg>
<div class="t" style="left:269.2px;top:255px;color:#000;letter-spacing:0.9px;">Refactor</div>
<svg style="position:absolute;left:659px;top:259px" width="7" height="11" viewBox="0 0 7 11"><path d="M1 0.7l4.7 4.8-4.7 4.8" fill="none" stroke="#1c1c1c" stroke-width="1.25"/></svg>
<div class="t" style="left:269.2px;top:281px;color:#000;letter-spacing:0.894px;">Source</div>
<svg style="position:absolute;left:659px;top:285px" width="7" height="11" viewBox="0 0 7 11"><path d="M1 0.7l4.7 4.8-4.7 4.8" fill="none" stroke="#1c1c1c" stroke-width="1.25"/></svg>
<div class="t" style="left:269.2px;top:307px;color:#a0a0a0;letter-spacing:0.952px;">Move...</div>
<div class="t" style="left:269.2px;top:333px;color:#000;letter-spacing:0.287px;">Rename...</div>
<div class="t" style="right:480.916px;top:333px;color:#000;letter-spacing:-0.416px;">F2</div>
<div style="position:absolute;left:235px;top:360px;width:439px;height:1px;background:#d9d9d9;"></div>
<div class="t" style="left:269.2px;top:370px;color:#000;letter-spacing:1.737px;">Import</div>
<svg style="position:absolute;left:659px;top:374px" width="7" height="11" viewBox="0 0 7 11"><path d="M1 0.7l4.7 4.8-4.7 4.8" fill="none" stroke="#1c1c1c" stroke-width="1.25"/></svg>
<div class="t" style="left:269.2px;top:396px;color:#000;letter-spacing:0.63px;">Export...</div>
<svg style="position:absolute;left:236px;top:398px" width="17" height="15" viewBox="0 0 17 15"><path d="M1.5 6.5h3.5v3.2h-1.2v2.2h9v-2.2h-1.2v-3.2h3.5v7.2h-13.6z" fill="#b7c8e6" stroke="#5b73b1" stroke-width="1.1" stroke-linejoin="round"/><path d="M6.2 9.3l6.2-6.2" stroke="#5b97cf" stroke-width="1.4"/><path d="M9.6 1.6h4.2v4.2z" fill="#5b97cf"/></svg>
<div style="position:absolute;left:235px;top:423px;width:439px;height:1px;background:#d9d9d9;"></div>
<div class="t" style="left:269.2px;top:433px;color:#000;letter-spacing:0.504px;">Show Build Settings...</div>
<div class="t" style="left:269.2px;top:459px;color:#000;letter-spacing:0.732px;">Build Project</div>
<div class="t" style="left:269.2px;top:485px;color:#000;letter-spacing:0.571px;">Clean Project</div>
<div class="t" style="left:269.2px;top:511px;color:#000;letter-spacing:0.813px;">Rebuild Project</div>
<div class="t" style="left:269.2px;top:537px;color:#000;letter-spacing:0.511px;">Refresh</div>
<div class="t" style="right:480.916px;top:537px;color:#000;letter-spacing:-0.416px;">F5</div>
<svg style="position:absolute;left:236px;top:538px" width="17" height="17" viewBox="0 0 17 17"><path d="M5.6 1.6h7.2l3 3v10.2h-10.2z" fill="url(#gPage)" stroke="#b09a5e" stroke-width="1.1"/><path d="M12.6 1.8v2.9h2.9" fill="#e8cf90" stroke="#c4a868" stroke-width="0.8"/><path d="M3.2 7.6q-0.8-3.2 2.4-3.6h2.6" fill="none" stroke="#c99220" stroke-width="2.6" stroke-linecap="round"/><path d="M3.2 7.6q-0.8-3.2 2.4-3.6h2.6" fill="none" stroke="#f7d664" stroke-width="1.4" stroke-linecap="round"/><path d="M9.4 4q-0.4 3-3.4 3" fill="none" stroke="#c99220" stroke-width="1"/><path d="M8.8 9.6q0.8 3.2-2.4 3.6h-2.6" fill="none" stroke="#c99220" stroke-width="2.6" stroke-linecap="round"/><path d="M8.8 9.6q0.8 3.2-2.4 3.6h-2.6" fill="none" stroke="#f7d664" stroke-width="1.4" stroke-linecap="round"/></svg>
<div class="t" style="left:269.2px;top:563px;color:#000;letter-spacing:0.641px;">Close Project</div>
<div style="position:absolute;left:235px;top:590px;width:439px;height:1px;background:#d9d9d9;"></div>
<div class="t" style="left:269.2px;top:600px;color:#000;letter-spacing:0.771px;">Build Targets</div>
<svg style="position:absolute;left:659px;top:604px" width="7" height="11" viewBox="0 0 7 11"><path d="M1 0.7l4.7 4.8-4.7 4.8" fill="none" stroke="#1c1c1c" stroke-width="1.25"/></svg>
<div class="t" style="left:269.2px;top:626px;color:#000;letter-spacing:1.074px;">Index</div>
<svg style="position:absolute;left:659px;top:630px" width="7" height="11" viewBox="0 0 7 11"><path d="M1 0.7l4.7 4.8-4.7 4.8" fill="none" stroke="#1c1c1c" stroke-width="1.25"/></svg>
<div style="position:absolute;left:231px;top:648px;width:447px;height:26px;background:#f0f0f0;border-radius:4px;"></div>
<div class="t" style="left:269.2px;top:652px;color:#000;letter-spacing:0.703px;">Build Configurations</div>
<svg style="position:absolute;left:659px;top:656px" width="7" height="11" viewBox="0 0 7 11"><path d="M1 0.7l4.7 4.8-4.7 4.8" fill="none" stroke="#1c1c1c" stroke-width="1.25"/></svg>
<div style="position:absolute;left:235px;top:679px;width:439px;height:1px;background:#d9d9d9;"></div>
<div class="t" style="left:269.2px;top:689px;color:#000;letter-spacing:0.936px;">Debug As</div>
<svg style="position:absolute;left:659px;top:693px" width="7" height="11" viewBox="0 0 7 11"><path d="M1 0.7l4.7 4.8-4.7 4.8" fill="none" stroke="#1c1c1c" stroke-width="1.25"/></svg>
<svg style="position:absolute;left:236px;top:690px" width="18" height="17" viewBox="0 0 18 17"><path d="M6 1.2v4M10 2.5l-1.2 3.2M1.2 5.3h4.3M2.2 9.6l3-1.5M5.6 12.2l1.2 3M10.4 13l1.5 2.4M11 4.8l3.8 1.4M12.8 8.8l2.6 1.8" stroke="#2f6a4a" stroke-width="1.3" stroke-linecap="round"/><g transform="rotate(40 9.5 9)"><ellipse cx="10" cy="9.3" rx="4.6" ry="3.5" fill="#b9dcae" stroke="#2a7aa0" stroke-width="1.1"/><path d="M6.5 9.3h7" stroke="#5aa070" stroke-width="0.8"/></g><circle cx="6.2" cy="5.6" r="1.9" fill="#7fc6a0" stroke="#2a7aa0" stroke-width="1"/></svg>
<div class="t" style="left:269.2px;top:715px;color:#000;letter-spacing:0.67px;">Restore from Local History...</div>
<div class="t" style="left:269.2px;top:741px;color:#000;letter-spacing:1.438px;">Team</div>
<svg style="position:absolute;left:659px;top:745px" width="7" height="11" viewBox="0 0 7 11"><path d="M1 0.7l4.7 4.8-4.7 4.8" fill="none" stroke="#1c1c1c" stroke-width="1.25"/></svg>
<div class="t" style="left:269.2px;top:767px;color:#000;letter-spacing:0.849px;">Compare With</div>
<svg style="position:absolute;left:659px;top:771px" width="7" height="11" viewBox="0 0 7 11"><path d="M1 0.7l4.7 4.8-4.7 4.8" fill="none" stroke="#1c1c1c" stroke-width="1.25"/></svg>
<div style="position:absolute;left:235px;top:794px;width:439px;height:1px;background:#d9d9d9;"></div>
<div class="t" style="left:269.2px;top:804px;color:#000;letter-spacing:0.969px;">Properties</div>
<div class="t" style="right:479.478px;top:804px;color:#000;letter-spacing:1.022px;">Alt+Enter</div>
<div style="position:absolute;left:680px;top:645px;width:229.5px;height:146.5px;background:#f9f9f9;border:1px solid #e3e3e3;box-sizing:border-box;border-radius:7px;box-shadow:0 8px 14px -2px rgba(0,0,0,0.15), 0 0 4px rgba(0,0,0,0.04);"></div>
<div style="position:absolute;left:686px;top:674px;width:217px;height:26px;background:#f0f0f0;border-radius:4px;"></div>
<div class="t" style="left:724.2px;top:652px;color:#000;letter-spacing:0.585px;">Manage...</div>
<div class="t" style="left:724.2px;top:678px;color:#000;letter-spacing:0.889px;">Set Active</div>
<svg style="position:absolute;left:884px;top:682px" width="7" height="11" viewBox="0 0 7 11"><path d="M1 0.7l4.7 4.8-4.7 4.8" fill="none" stroke="#1c1c1c" stroke-width="1.25"/></svg>
<div style="position:absolute;left:690px;top:705px;width:209px;height:1px;background:#dcdcdc;"></div>
<div class="t" style="left:724.2px;top:715px;color:#000;letter-spacing:0.803px;">Build All</div>
<div class="t" style="left:724.2px;top:741px;color:#000;letter-spacing:0.587px;">Clean All</div>
<div class="t" style="left:724.2px;top:767px;color:#000;letter-spacing:0.525px;">Build Selected...</div>
<div style="position:absolute;left:905px;top:671.5px;width:220px;height:56.5px;background:#f9f9f9;border:1px solid #e3e3e3;box-sizing:border-box;border-radius:7px;box-shadow:0 8px 14px -2px rgba(0,0,0,0.15), 0 0 4px rgba(0,0,0,0.04);"></div>
<div style="position:absolute;left:911px;top:674px;width:208px;height:26px;background:#f0f0f0;border-radius:4px;"></div>
<svg style="position:absolute;left:918px;top:683px" width="12" height="9" viewBox="0 0 12 9"><path d="M1 4.5l3.5 3.5 6.5-7" fill="none" stroke="#333" stroke-width="1.1"/></svg>
<div class="t" style="left:949.5px;top:678px;color:#000;letter-spacing:-0.193px;">1 CPU1_FLASH</div>
<div class="t" style="left:949.5px;top:704px;color:#000;letter-spacing:0.1px;">2 CPU1_RAM</div>
<div style="position:absolute;left:0px;top:38px;width:219px;height:29px;border:2px solid #ff0000;box-sizing:border-box;"></div>
<div style="position:absolute;left:246px;top:642px;width:375px;height:32px;border:2px solid #ff0000;box-sizing:border-box;"></div>
<div style="position:absolute;left:696px;top:671px;width:406px;height:30px;border:2px solid #ff0000;box-sizing:border-box;"></div>
</body></html>
